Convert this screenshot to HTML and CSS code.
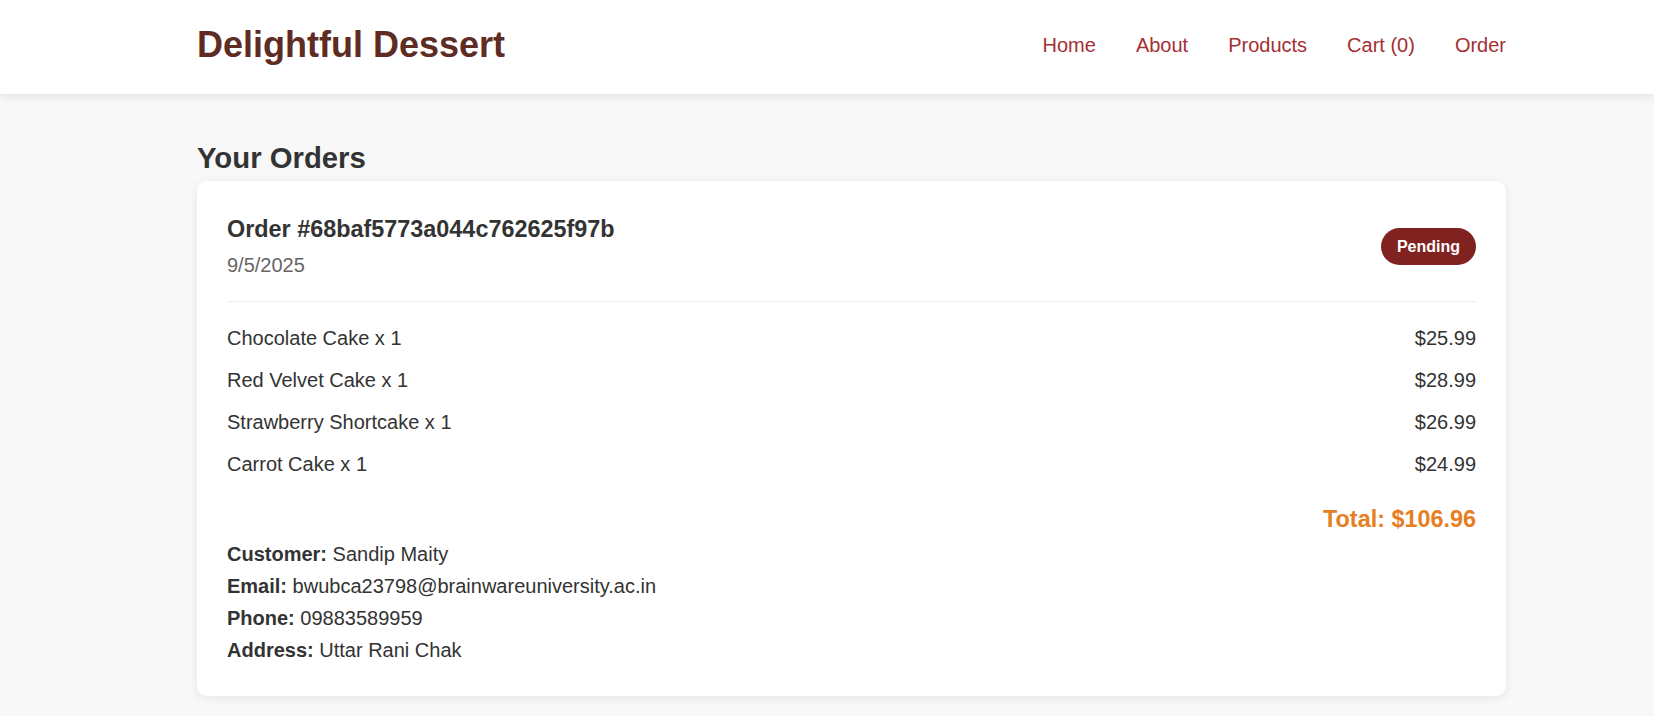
FILE: index.html
```html
<!DOCTYPE html>
<html lang="en">
<head>
<meta charset="utf-8">
<title>Delightful Dessert - Orders</title>
<link rel="stylesheet" href="styles.css">
</head>
<body>
<header class="site-header">
  <div class="container header-inner">
    <div class="logo">Delightful Dessert</div>
    <nav class="nav">
      <a href="#">Home</a>
      <a href="#">About</a>
      <a href="#">Products</a>
      <a href="#">Cart (0)</a>
      <a href="#">Order</a>
    </nav>
  </div>
</header>
<main class="container main">
  <h2 class="page-title">Your Orders</h2>
  <section class="order-card">
    <div class="order-header">
      <div class="order-meta">
        <h3 class="order-id">Order #68baf5773a044c762625f97b</h3>
        <div class="order-date">9/5/2025</div>
      </div>
      <span class="badge">Pending</span>
    </div>
    <div class="order-items">
      <div class="item-row"><span>Chocolate Cake x 1</span><span>$25.99</span></div>
      <div class="item-row"><span>Red Velvet Cake x 1</span><span>$28.99</span></div>
      <div class="item-row"><span>Strawberry Shortcake x 1</span><span>$26.99</span></div>
      <div class="item-row"><span>Carrot Cake x 1</span><span>$24.99</span></div>
    </div>
    <div class="order-total">Total: $106.96</div>
    <div class="customer">
      <div><strong>Customer:</strong> Sandip Maity</div>
      <div><strong>Email:</strong> bwubca23798@brainwareuniversity.ac.in</div>
      <div><strong>Phone:</strong> 09883589959</div>
      <div><strong>Address:</strong> Uttar Rani Chak</div>
    </div>
  </section>
</main>
</body>
</html>
```
FILE: styles.css
```css
* { box-sizing: border-box; }

html, body {
  margin: 0;
  padding: 0;
}

body {
  font-family: "Liberation Sans", Arial, sans-serif;
  font-size: 20px;
  line-height: 1.6;
  color: #333;
  background: #f8f8f8;
}

.container {
  width: 1309px;
  margin-left: 197px;
  margin-right: 148px;
}

.site-header {
  background: #fff;
  box-shadow: 0 2px 10px rgba(0, 0, 0, 0.1);
  padding: 16px 0 20px;
}

.header-inner {
  display: flex;
  align-items: center;
  justify-content: space-between;
}

.logo {
  font-size: 36px;
  font-weight: bold;
  color: #5e2c22;
}

.nav {
  display: flex;
  gap: 40px;
}

.nav a {
  color: #a33033;
  text-decoration: none;
  font-size: 20px;
}

.main {
  padding-top: 41px;
  padding-bottom: 21px;
}

.page-title {
  margin: 0;
  font-size: 29.3px;
  font-weight: bold;
  color: #333;
}

.order-card {
  background: #fff;
  border-radius: 10px;
  box-shadow: 0 2px 10px rgba(0, 0, 0, 0.08);
  padding: 30px;
}

.order-header {
  display: flex;
  align-items: center;
  justify-content: space-between;
  padding-bottom: 20px;
  border-bottom: 1px solid #eee;
  margin-bottom: 15px;
}

.order-id {
  margin: 0;
  font-size: 23.4px;
  font-weight: bold;
  color: #333;
}

.order-date {
  color: #666;
}

.badge {
  display: inline-block;
  height: 37px;
  line-height: 37px;
  padding: 0 16px;
  border-radius: 20px;
  background: #80221f;
  color: #fff;
  font-size: 16px;
  font-weight: bold;
}

.item-row {
  display: flex;
  justify-content: space-between;
  padding: 5px 0;
}

.order-total {
  margin-top: 16px;
  text-align: right;
  font-size: 23.4px;
  font-weight: bold;
  color: #e67e22;
}
```
